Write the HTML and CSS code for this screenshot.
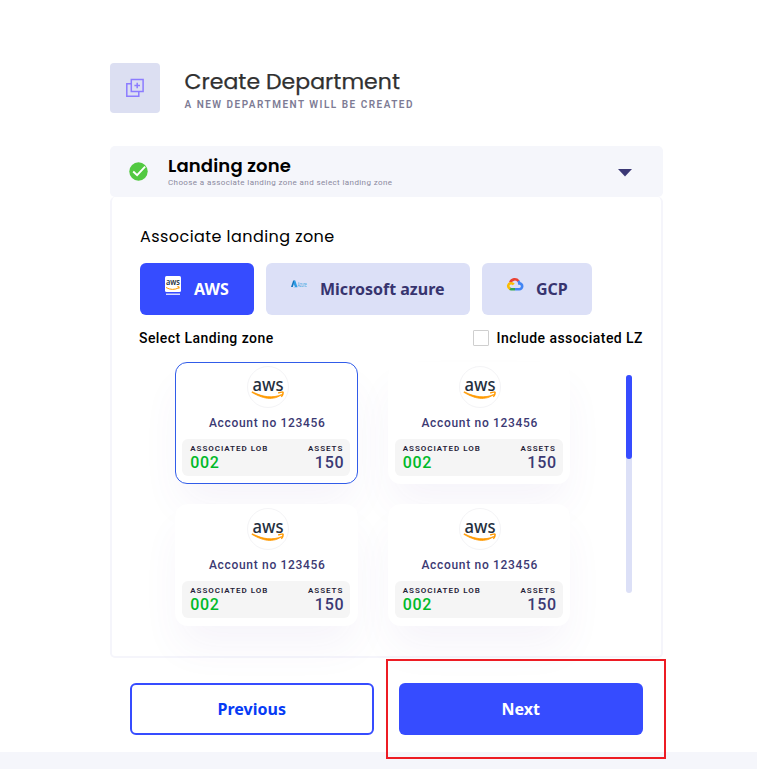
FILE: index.html
```
<!DOCTYPE html>
<html lang="en">
<head>
<meta charset="utf-8">
<title>Create Department</title>
<link rel="stylesheet" href="styles.css">
</head>
<body>
<main class="page">
  <header class="heading">
    <div class="heading-icon">
      <svg width="20" height="20" viewBox="0 0 20 20" fill="none" stroke="#8c7cff" stroke-width="1.5"><path d="M6.3 1.5h11.8v12H6.3z"/><path d="M6.3 5.8H1.8v12.4h12v-4.7"/><path d="M12.2 4.7v5.6M9.4 7.5H15"/></svg>
    </div>
    <div class="heading-text">
      <h1>Create Department</h1>
      <p>A NEW DEPARTMENT WILL BE CREATED</p>
    </div>
  </header>

  <section class="accordion">
    <div class="accordion-bar">
      <svg class="check" width="19" height="19" viewBox="0 0 19 19"><circle cx="9.5" cy="9.5" r="9.2" fill="#52c941"/><path d="M4.2 9.5l3.9 3.7 8-8.5" fill="none" stroke="#fff" stroke-width="1.9"/></svg>
      <div class="bar-text">
        <h2>Landing zone</h2>
        <p>Choose a associate landing zone and select landing zone</p>
      </div>
      <svg class="caret" width="14" height="8" viewBox="0 0 14 8"><path d="M0 0h14L7 7.6z" fill="#3b3875"/></svg>
    </div>
    <div class="panel">
      <h3>Associate landing zone</h3>
      <div class="tabs">
        <button class="tab tab-aws active">
          <svg class="tab-logo" width="16" height="20" viewBox="0 0 16 20"><rect width="16" height="16" rx="1.5" fill="#fff"/><text x="1" y="9.3" class="aws-mini" textLength="14" lengthAdjust="spacingAndGlyphs">aws</text><path d="M1 11.5q6.5 3.7 13 .2M12.3 10.6q2.8-.6 1.6 2" fill="none" stroke="#f90" stroke-width="1"/><path d="M1 18.2h14" stroke="#fff" stroke-width="1.2"/></svg>
          <span>AWS</span>
        </button>
        <button class="tab tab-azure">
          <svg class="tab-logo" width="16" height="8" viewBox="0 0 16 8"><path d="M2.2.5h1.6L1.8 7H0z" fill="#1475bd"/><path d="M3.2.5h1.1L6.5 7.3H2.2l2-.8-1.4-1.7z" fill="#2b9ce5"/><text x="6.5" y="6.7" class="azure-mini" textLength="9.3" lengthAdjust="spacingAndGlyphs">Azure</text></svg>
          <span>Microsoft azure</span>
        </button>
        <button class="tab tab-gcp">
          <svg class="tab-logo" width="16" height="13" viewBox="0 0 16 13" fill="none" stroke-width="2.6"><path d="M3.3 4.4C4.7.8 9.3.3 11.5 3.2" stroke="#ea4335"/><path d="M11.3 3q.9 1.1 1 2.4a2.9 2.9 0 0 1 0 5.8H8" stroke="#4285f4"/><path d="M8 11.2H4.2q-1-.1-1.6-.5" stroke="#34a853"/><path d="M3.1 10.8C-.1 8.9 1.2 5.2 4.2 5.2q1.5 0 2.5 1.3" stroke="#fbbc04"/></svg>
          <span>GCP</span>
        </button>
      </div>
      <div class="filter">
        <span class="select-label">Select Landing zone</span>
        <label class="include"><i class="box"></i><span>Include associated LZ</span></label>
      </div>
      <div class="zones">
        <div class="cards">
          <article class="card selected">
            <div class="logo"><svg width="34" height="28" viewBox="0 0 34 28"><text x="1.5" y="17.5" class="aws-word" textLength="31" lengthAdjust="spacingAndGlyphs">aws</text><path d="M.8 19.3C8 23.5 20 29.4 30.7 21.6C22 25.3 12 24.4 1.4 18.8Z" fill="#f90" stroke="#f90" stroke-width=".8"/><path d="M27.2 20q4.8-1.5 4.9-.5.2 2-1.8 4.3" fill="none" stroke="#f90" stroke-width="1.5"/></svg></div>
            <p class="account">Account no 123456</p>
            <div class="stats"><div><small>ASSOCIATED LOB</small><b class="lob">002</b></div><div class="right"><small>ASSETS</small><b>150</b></div></div>
          </article>
          <article class="card">
            <div class="logo"><svg width="34" height="28" viewBox="0 0 34 28"><text x="1.5" y="17.5" class="aws-word" textLength="31" lengthAdjust="spacingAndGlyphs">aws</text><path d="M.8 19.3C8 23.5 20 29.4 30.7 21.6C22 25.3 12 24.4 1.4 18.8Z" fill="#f90" stroke="#f90" stroke-width=".8"/><path d="M27.2 20q4.8-1.5 4.9-.5.2 2-1.8 4.3" fill="none" stroke="#f90" stroke-width="1.5"/></svg></div>
            <p class="account">Account no 123456</p>
            <div class="stats"><div><small>ASSOCIATED LOB</small><b class="lob">002</b></div><div class="right"><small>ASSETS</small><b>150</b></div></div>
          </article>
          <article class="card">
            <div class="logo"><svg width="34" height="28" viewBox="0 0 34 28"><text x="1.5" y="17.5" class="aws-word" textLength="31" lengthAdjust="spacingAndGlyphs">aws</text><path d="M.8 19.3C8 23.5 20 29.4 30.7 21.6C22 25.3 12 24.4 1.4 18.8Z" fill="#f90" stroke="#f90" stroke-width=".8"/><path d="M27.2 20q4.8-1.5 4.9-.5.2 2-1.8 4.3" fill="none" stroke="#f90" stroke-width="1.5"/></svg></div>
            <p class="account">Account no 123456</p>
            <div class="stats"><div><small>ASSOCIATED LOB</small><b class="lob">002</b></div><div class="right"><small>ASSETS</small><b>150</b></div></div>
          </article>
          <article class="card">
            <div class="logo"><svg width="34" height="28" viewBox="0 0 34 28"><text x="1.5" y="17.5" class="aws-word" textLength="31" lengthAdjust="spacingAndGlyphs">aws</text><path d="M.8 19.3C8 23.5 20 29.4 30.7 21.6C22 25.3 12 24.4 1.4 18.8Z" fill="#f90" stroke="#f90" stroke-width=".8"/><path d="M27.2 20q4.8-1.5 4.9-.5.2 2-1.8 4.3" fill="none" stroke="#f90" stroke-width="1.5"/></svg></div>
            <p class="account">Account no 123456</p>
            <div class="stats"><div><small>ASSOCIATED LOB</small><b class="lob">002</b></div><div class="right"><small>ASSETS</small><b>150</b></div></div>
          </article>
        </div>
        <div class="scroll"><div class="thumb"></div></div>
      </div>
    </div>
  </section>

  <footer class="actions">
    <button class="btn previous">Previous</button>
    <div class="next-wrap"><button class="btn next">Next</button><div class="highlight"></div></div>
  </footer>
</main>
</body>
</html>
```
FILE: styles.css
```
* { box-sizing: border-box; margin: 0; }
body { background: #f5f6fb; height: 769px; overflow: hidden; font-family: Roboto, sans-serif; }
button { font: inherit; border: 0; padding: 0; }
svg { overflow: visible; }
.page { height: 752px; background: #fff; padding: 63px 94px 0 110px; }

.heading { display: flex; height: 50px; gap: 24.5px; }
.heading-icon { width: 50px; height: 50px; border-radius: 4px; background: #dcdff2; display: flex; align-items: center; justify-content: center; }
.heading-text { padding-top: 4px; white-space: nowrap; }
h1 { font: 400 22px/30px Poppins, Inter, sans-serif; color: #303030; letter-spacing: .04px; -webkit-text-stroke: .25px #303030; }
.heading-text p { font-size: 10px; line-height: 12px; font-weight: 600; letter-spacing: 1.49px; color: #7d7b94; padding-top: 2px; }

.accordion { margin-top: 33px; width: 553px; }
.accordion-bar { height: 51px; border-radius: 5px; background: #f5f6fb; display: flex; padding: 0 31px 0 19px; align-items: center; }
.bar-text { margin-left: 20px; flex: 1; align-self: flex-start; padding-top: 8px; white-space: nowrap; }
h2 { font: 600 18px/24px Poppins, Inter, sans-serif; color: #000; letter-spacing: .16px; }
.bar-text p { font-size: 8px; line-height: 9px; color: #8b899e; letter-spacing: .39px; }
.caret { margin-top: 2px; }
.panel { height: 461px; border: 2px solid #f5f5fb; border-top: 0; border-radius: 5px; padding: 28px 18px 0 28px; }
h3 { font: 400 16px/24px Poppins, Inter, sans-serif; color: #000; letter-spacing: .44px; }
.tabs { display: flex; gap: 12px; margin-top: 14px; }
.tab { height: 52px; border-radius: 6px; background: #dce0f7; color: #37346f; display: flex; align-items: center; font: 700 16px/24px "Noto Sans", sans-serif; white-space: nowrap; }
.tab-logo { flex: none; margin-bottom: 7px; }
.tab span { margin-left: 13px; }
.tab-aws { width: 114px; padding-left: 25px; }
.tab-azure { width: 204px; padding-left: 25px; }
.tab-azure .tab-logo { margin-bottom: 10px; }
.tab-gcp { width: 110px; padding-left: 25px; }
.tab-gcp .tab-logo { margin-bottom: 10px; }
.active { background: #364cff; color: #fff; }
.aws-mini { font: 600 9px "Noto Sans", sans-serif; fill: #252f3e; }
.azure-mini { font: 400 7px "Noto Sans", sans-serif; fill: #41a7e2; }
.filter { display: flex; justify-content: space-between; align-items: center; height: 16px; margin: 15px 0 0 -1px; font-weight: 500; font-size: 14px; line-height: 16px; letter-spacing: .44px; color: #000; white-space: nowrap; }
.include { display: flex; align-items: center; gap: 7.5px; }
.box { width: 16px; height: 16px; border: 1px solid #cfcfcf; border-radius: 1px; background: #fff; }
.zones { display: flex; justify-content: space-between; margin: 16px 11px 0 35px; }
.cards { display: grid; grid-template-columns: 182.5px 182.5px; gap: 20px 30px; }
.card { height: 122px; border-radius: 12px; background: #fff; border: 1px solid #fff; display: flex; flex-direction: column; align-items: center; padding: 3px 6px 0; box-shadow: 0 24px 40px -4px rgba(110, 64, 176, .06); }
.card.selected { border-color: #315ce9; }
.logo { width: 42px; height: 42px; border: 1px solid #f4f4f6; border-radius: 50%; display: flex; justify-content: center; align-items: center; margin-left: 2.5px; }
.aws-word { font: 500 18px "Noto Sans", sans-serif; fill: #252f3e; }
.account { font-size: 12px; line-height: 16px; font-weight: 500; letter-spacing: .69px; color: #3b3973; margin-top: 7px; margin-left: 2px; white-space: nowrap; }
.stats { width: 168px; height: 37px; border-radius: 6px; background: #f5f5f5; margin-top: 8px; padding: 5px 7px 0 8px; display: flex; justify-content: space-between; white-space: nowrap; }
.stats small { display: block; font-size: 8px; line-height: 10px; font-weight: 600; letter-spacing: .97px; color: #252238; }
.stats b { display: block; font-size: 16px; line-height: 18px; font-weight: 500; letter-spacing: .7px; color: #3b3973; }
.stats .lob { color: #00b929; }
.right { text-align: right; }
.right b { margin-right: -1px; }
.scroll { width: 6px; height: 218px; margin-top: 13px; border-radius: 3px; background: #dce0f7; }
.thumb { height: 84px; border-radius: 3px; background: #364cff; }

.actions { display: flex; gap: 25.5px; margin: 25px 0 0 20px; }
.btn { width: 243.5px; height: 52px; border-radius: 6px; font: 700 16px/24px "Noto Sans", sans-serif; }
.previous { background: #fff; border: 2px solid #364cff; color: #063bf5; }
.next { background: #364cff; color: #fff; }
.next-wrap { position: relative; height: 52px; }
.highlight { position: absolute; left: -13px; top: -24px; width: 280px; height: 100px; border: 2px solid #ed1c24; }
```
